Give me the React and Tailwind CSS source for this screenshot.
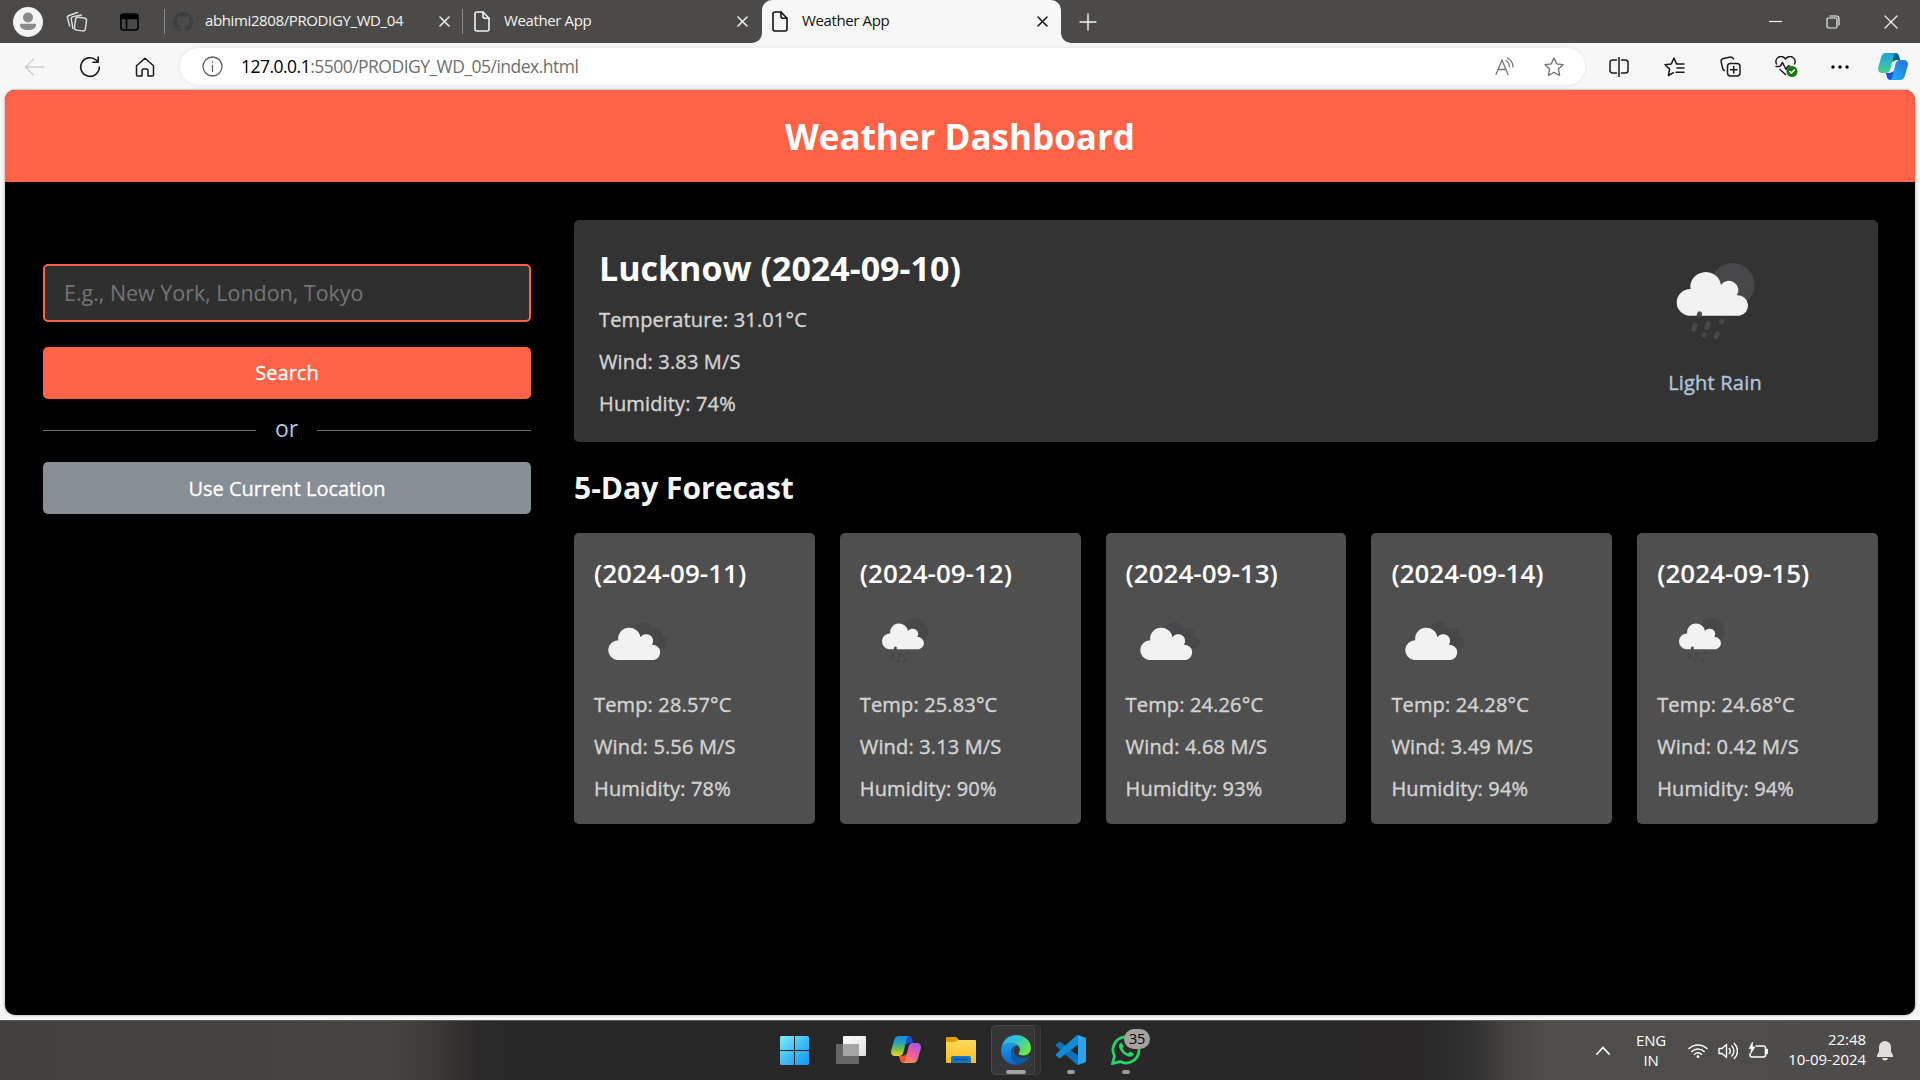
import React from "react";

const S = ({ w, h, vb, className = "", children, sw = 1.3, ...p }) => (
  <svg width={w} height={h ?? w} viewBox={vb ?? `0 0 ${w} ${h ?? w}`} fill="none" stroke="currentColor" strokeWidth={sw} strokeLinecap="round" strokeLinejoin="round" className={`block shrink-0 ${className}`} {...p}>
    {children}
  </svg>
);

const PageIcon = () => (
  <S w={16} h={21} sw={1.6}>
    <path d="M1 3a2 2 0 0 1 2-2h6l6 6.2V18a2 2 0 0 1-2 2H3a2 2 0 0 1-2-2z" />
    <path d="M9 1v4.2a2 2 0 0 0 2 2h4" />
  </S>
);

const CloseX = ({ className }) => (
  <S w={11} sw={1.5} className={className}><path d="M1 1l9 9M10 1l-9 9" /></S>
);

const CLOUD = "M13.5 46 A13.5 13.5 0 0 1 15 19.1 A14.7 14.7 0 0 1 44.6 15.2 A8.8 8.8 0 0 1 60 25.4 A10.4 10.4 0 0 1 62.5 46 Z";

const RainIcon = ({ width, height }) => (
  <svg width={width} height={height} viewBox="0 0 80 76" className="block">
    <circle cx="57.6" cy="22" r="22" fill="#48484a" />
    <path transform="translate(0 6.8) scale(1.03 1)" d={CLOUD} fill="#f2f2f2" />
    <g stroke="#48484a" strokeWidth="4.8" strokeLinecap="round">
      <path d="M24.6 50.8l-.5 1.6M20.3 62.2l-1.5 4M33.3 60.3l-1.6 4M47 57.9l-.6 1.2M29.3 71.4l-.3.8M42.3 70.4l-1.4 3.2" />
    </g>
  </svg>
);

const CloudIcon = () => (
  <svg width="62" height="40" viewBox="0 0 62 40" className="block">
    <path transform="translate(17.5 0) scale(.61 .6)" d={CLOUD} fill="#48484a" />
    <path transform="translate(0 5) scale(.75 .74)" d={CLOUD} fill="#f2f2f2" />
  </svg>
);

function TabBar() {
  return (
    <div className="flex h-[43px] bg-[#4b4a48] text-[#f2f2f2]">
      <div className="flex w-[165px] shrink-0 items-center pl-[13px]">
        <svg width="30" height="30" viewBox="0 0 30 30" className="shrink-0"><circle cx="15" cy="15" r="15" fill="#f5f5f5" /><circle cx="15" cy="10.5" r="5" fill="#8a8a8a" /><path d="M8 16.8h14c.7 0 1 .5 1 1.2 0 3-3.4 5-8 5s-8-2-8-5c0-.7.3-1.2 1-1.2z" fill="#8a8a8a" /></svg>
        <S w={22} className="ml-[23px] text-[#dcdcdc]" sw={1.4}>
          <rect x="9" y="6.5" width="11" height="13" rx="2.5" transform="rotate(8 14 13)" />
          <path d="M7 17.5l-1.7-9.2a2.3 2.3 0 0 1 1.8-2.7L15.5 4" />
          <path d="M3.7 15L1.5 7.2A2.3 2.3 0 0 1 3 4.5L11.5 1.5" />
        </S>
        <S w={19} h={18} className="ml-8 text-black" sw={1.6}><rect x="1" y="1" width="17" height="16" rx="2.5" /><path d="M1 2.5h17v3H1z" fill="currentColor" /><path d="M6.5 5v12" /></S>
        <div className="ml-[25px] h-[25px] w-px shrink-0 bg-[#8a8987]" />
      </div>
      <div className="flex w-[298px] items-center pl-[8px]">
        <svg width="20" height="20" viewBox="0 0 16 16" fill="#3a3f44" className="shrink-0"><path d="M8 0C3.580 0 0 3.580 0 8c0 3.540 2.290 6.530 5.470 7.590.4.070.55-.17.55-.38 0-.19-.010-.82-.010-1.490-2.010.37-2.530-.49-2.690-.94-.09-.23-.48-.94-.82-1.130-.28-.15-.68-.52-.010-.53.63-.010 1.080.58 1.230.82.72 1.210 1.870.87 2.330.66.070-.52.28-.87.51-1.070-1.780-.2-3.640-.89-3.640-3.950 0-.87.31-1.590.82-2.150-.08-.2-.36-1.020.08-2.120 0 0 .67-.21 2.200.82.64-.18 1.320-.27 2-.27s1.360.09 2 .27c1.530-1.040 2.200-.82 2.200-.82.44 1.100.16 1.920.08 2.120.51.56.82 1.270.82 2.150 0 3.070-1.870 3.750-3.650 3.950.29.25.54.73.54 1.480 0 1.070-.010 1.930-.010 2.200 0 .21.15.46.55.38A8.010 8.010 0 0 0 16 8c0-4.420-3.580-8-8-8z" /></svg>
        <span className="mb-0.5 ml-3 flex-1 whitespace-nowrap text-[15px] tracking-[-0.38px]">abhimi2808/PRODIGY_WD_04</span>
        <CloseX className="mr-[12px]" />
        <div className="h-[25px] w-px bg-[#8a8987]" />
      </div>
      <div className="flex w-[299px] items-center pl-[11px]">
        <PageIcon />
        <span className="mb-0.5 ml-[14px] flex-1 text-[15px] tracking-[-0.38px]">Weather App</span>
        <CloseX className="mr-[14px]" />
      </div>
      <div className="relative flex w-[299px] items-center rounded-t-[10px] bg-[#f7f7f7] pl-[10px] text-[#111]">
        <svg width="10" height="10" className="absolute bottom-0 -left-[10px]"><path d="M10 0v10H0A10 10 0 0 0 10 0z" fill="#f7f7f7" /></svg>
        <svg width="10" height="10" className="absolute bottom-0 -right-[10px]"><path d="M0 0v10h10A10 10 0 0 1 0 0z" fill="#f7f7f7" /></svg>
        <PageIcon />
        <span className="mb-0.5 ml-[14px] flex-1 text-[15px] tracking-[-0.38px]">Weather App</span>
        <CloseX className="mr-[13px]" />
      </div>
      <div className="flex flex-1 items-center pl-[18px]">
        <S w={18} sw={1.4}><path d="M9 1v16M1 9h16" /></S>
      </div>
      <div className="flex items-center pr-[22px]">
        <S w={13} sw={1.2} strokeLinecap="butt"><path d="M0 6.5h13" /></S>
        <S w={14} sw={1.2} className="ml-11"><rect x="1" y="3" width="10" height="10" rx="1.5" /><path d="M4 1h6.5A2.5 2.5 0 0 1 13 3.5V10" /></S>
        <S w={14} sw={1.2} className="ml-11"><path d="M1 1l12 12M13 1L1 13" /></S>
      </div>
    </div>
  );
}

function NavBar() {
  return (
    <div className="flex h-[47px] items-center bg-[#f7f7f7] text-[#1b1b1b]">
      <S w={21} h={18} className="ml-[24px] text-[#cfcfcf]" sw={1.4}><path d="M20 9H1.5M9.5 1L1.5 9l8 8" /></S>
      <S w={22} className="ml-[34px]" sw={1.6}><path d="M20.3 11a9.3 9.3 0 1 1-3.2-7l1.9 1.8M19.2 1v5.2H14" /></S>
      <S w={20} h={20} className="ml-[34px]" sw={1.5}><path d="M1.5 8.8L10 1.2l8.5 7.6V18a1 1 0 0 1-1 1H13v-5.5a1.5 1.5 0 0 0-1.5-1.5h-3A1.5 1.5 0 0 0 7 13.5V19H2.5a1 1 0 0 1-1-1z" /></S>
      <div className="ml-[25px] flex h-[37px] w-[1405px] items-center rounded-full bg-white pl-[22px] shadow-[0_0_4px_rgba(0,0,0,0.08)]">
        <S w={21} className="text-[#5f5f5f]" sw={1.3}><circle cx="10.5" cy="10.5" r="9.5" /><path d="M10.5 9.5v6M10.5 6v.3" sw={2} /></S>
        <span className="ml-[18px] flex-1 text-[17.5px] tracking-[-0.52px] text-[#6e6e6e]"><span className="text-black">127.0.0.1</span>:5500/PRODIGY_WD_05/index.html</span>
        <S w={20} h={19} className="text-[#767676]" sw={1.3}><path d="M1 17.5L7 3l6 14.5M3 12.5h8M11 3.5a7 7 0 0 1 3.3 6M12.5 1a10 10 0 0 1 5.5 9" /></S>
        <S w={20} h={20} className="mr-[21px] ml-[29px] text-[#767676]" sw={1.4}><path d="M10 1l2.7 5.9 6.3.8-4.6 4.4 1.2 6.4L10 15.4l-5.6 3.1 1.2-6.4L1 7.7l6.3-.8z" /></S>
      </div>
      <S w={20} className="ml-[24px]" sw={1.5}><path d="M7.5 3H3.5A2.5 2.5 0 0 0 1 5.5v8A2.5 2.5 0 0 0 3.5 16h4M12.5 3h4A2.5 2.5 0 0 1 19 5.5v8a2.5 2.5 0 0 1-2.5 2.5h-4M10 .5v19" /></S>
      <S w={21} h={20} className="ml-[35px]" sw={1.5}><path d="M12.5 6.9L10 1 7.3 6.900 1 7.700l4.600 4.400-1.200 6.400 5-2.800M12.500 6.900h7.500M13 11h7M12 15.200h8" /></S>
      <S w={21} h={21} className="ml-[35px]" sw={1.5}><rect x="7.5" y="7.5" width="12.5" height="12.5" rx="3" /><path d="M13.700 10.500v6.500M10.500 13.700H17M4.500 14.500a3 3 0 0 1-1.800-2.200L1.200 6A3 3 0 0 1 3.500 2.500L10.500 1a3 3 0 0 1 3 2" /></S>
      <S w={23} h={21} className="ml-[34px]" sw={1.5}><path d="M1.500 8A5 5 0 0 1 10.500 3.200 5 5 0 0 1 19.500 8M1 10.500h4L7.500 6.500l3.500 7 2.200-3.500H15M5 13.500L10.500 18.500" /><circle cx="17" cy="15.5" r="5.5" fill="#107c10" stroke="none" /><path d="M14.800 15.500l1.600 1.600 3-3.200" stroke="#fff" /></S>
      <svg width="18" height="4" viewBox="0 0 18 4" className="ml-[33px] shrink-0"><circle cx="2" cy="2" r="1.7" /><circle cx="9" cy="2" r="1.7" /><circle cx="16" cy="2" r="1.7" /></svg>
      <svg width="30" height="27" viewBox="0 0 30 27" className="ml-[29px] shrink-0">
        <defs>
          <linearGradient id="na" x1="0" y1="0" x2="0" y2="1"><stop offset="0" stopColor="#1aa0e0" /><stop offset="1" stopColor="#4fd08c" /></linearGradient>
          <linearGradient id="nb" x1="1" y1="0" x2="0" y2="1"><stop offset="0" stopColor="#2f6fd8" /><stop offset="1" stopColor="#16b4f6" /></linearGradient>
        </defs>
        <CopilotShape a="url(#na)" b="url(#nb)" c="#0a5f8c" d="#1d4fd8" />
      </svg>
    </div>
  );
}

const CopilotShape = ({ a, b, c, d }) => (
  <g>
    <path d="M15 0h2.5c2 0 3 1 3.5 3l1.2 4H18l-4 2z" fill={c} />
    <path d="M15 27h-2.5c-2 0-3-1-3.5-3l-1.2-4H12l4-2z" fill={d} />
    <path d="M8 0h10.5c-1.5 0-2.3 1.3-2.8 3l-3.2 13c-.8 2.5-2 4-4.5 4H4C1 20-.5 17.5.2 14.5L3 4.5C4 1.3 5.5 0 8 0z" fill={a} />
    <path d="M22 27H11.5c1.5 0 2.3-1.3 2.8-3l3.2-13c.8-2.5 2-4 4.5-4H26c3 0 4.5 2.5 3.8 5.5L27 22.5c-1 3.2-2.5 4.5-5 4.5z" fill={b} />
  </g>
);

const DAYS = [
  ["2024-09-11", "cloud", "28.57", "5.56", "78"],
  ["2024-09-12", "rain", "25.83", "3.13", "90"],
  ["2024-09-13", "cloud", "24.26", "4.68", "93"],
  ["2024-09-14", "cloud", "24.28", "3.49", "94"],
  ["2024-09-15", "rain", "24.68", "0.42", "94"],
];

function Dashboard() {
  return (
    <div className="mx-[5px] h-[925px] overflow-hidden rounded-[10px] bg-black font-['Open_Sans',sans-serif] shadow-[0_0_3px_rgba(0,0,0,0.4)]">
      <h1 className="flex h-[92px] items-center justify-center bg-[#ff6347] pt-[3px] text-[35px] font-bold text-white">Weather Dashboard</h1>
      <div className="flex gap-[43px] pt-[38px] pl-[38px]">
        <div className="w-[488px] shrink-0 pt-[44px]">
          <div className="flex h-[58px] items-center rounded-[5px] border-2 border-[#ff6347] bg-[#2f2f2f] px-[19px] text-[21.45px] text-[#757575]">E.g., New York, London, Tokyo</div>
          <button className="mt-[25px] flex h-[52px] w-full items-center justify-center rounded-[5px] bg-[#ff6347] text-[20px] text-white [-webkit-text-stroke:0.3px]">Search</button>
          <div className="flex h-[63px] items-center gap-[19px] text-[23px] text-[#b0c4de]">
            <div className="h-px w-[213px] bg-[#6c6c6c]" /><span className="relative -top-0.5">or</span><div className="h-px flex-1 bg-[#6c6c6c]" />
          </div>
          <button className="flex h-[52px] w-full items-center justify-center rounded-[5px] bg-[#868e96] pt-px text-[20px] text-white [-webkit-text-stroke:0.3px]">Use Current Location</button>
        </div>
        <div className="w-[1304px] shrink-0">
          <div className="flex h-[222px] justify-between rounded-[5px] bg-[#333] pr-[116px] pl-[25px]">
            <div className="pt-[25px] text-[20px] leading-[27px] tracking-[0.15px] text-[#d3d3d3] [-webkit-text-stroke:0.4px]">
              <h2 className="text-[34px] leading-[46px] font-bold tracking-normal text-white [-webkit-text-stroke:0]">Lucknow (2024-09-10)</h2>
              <p className="mt-[15px]">Temperature: 31.01°C</p>
              <p className="mt-[15px]">Wind: 3.83 M/S</p>
              <p className="mt-[15px]">Humidity: 74%</p>
            </div>
            <div className="flex w-[94px] flex-col items-center pt-[43px]">
              <RainIcon width={80} height={76} />
              <p className="mt-[30px] text-[20px] leading-[27px] tracking-[0.2px] whitespace-nowrap text-[#b0c4de] [-webkit-text-stroke:0.4px]">Light Rain</p>
            </div>
          </div>
          <h2 className="mt-[25px] mb-[25px] text-[30px] leading-[41px] font-bold text-[#f5f5f5]">5-Day Forecast</h2>
          <div className="grid grid-cols-5 gap-[25px]">
            {DAYS.map(([date, icon, temp, wind, hum]) => (
              <div key={date} className="h-[291px] rounded-[5px] bg-[#4f4f4f] pt-[23px] pl-5 text-[20px] leading-[27px] tracking-[0.15px] text-[#d3d3d3] [-webkit-text-stroke:0.4px]">
                <h3 className="text-[26px] leading-[35px] font-semibold tracking-normal text-white [-webkit-text-stroke:0]">({date})</h3>
                <div className={icon === "rain" ? "mt-[27px] h-[73px] pl-[21px]" : "mt-[30px] h-[70px] pl-[13px]"}>
                  {icon === "rain" ? <RainIcon width={47} height={45} /> : <CloudIcon />}
                </div>
                <p>Temp: {temp}°C</p>
                <p className="mt-[15px]">Wind: {wind} M/S</p>
                <p className="mt-[15px]">Humidity: {hum}%</p>
              </div>
            ))}
          </div>
        </div>
      </div>
    </div>
  );
}

function Taskbar() {
  return (
    <div className="mt-[5px] flex h-[60px] border-t border-[#5c5b5a] bg-[linear-gradient(90deg,#42413f_0px,#454441_390px,#3a3936_440px,#2b292a_480px,#282828_560px,#292728_1420px,#313030_1470px,#464542_1510px,#4f4e4b_1550px,#4d4c4b_1920px)] text-white">
      <div className="flex flex-1 pl-[780px]">
        <svg width="29" height="29" viewBox="0 0 29 29" className="mt-[15px] shrink-0"><defs><linearGradient id="win" gradientUnits="userSpaceOnUse" x1="0" y1="0" x2="29" y2="29"><stop offset="0" stopColor="#7eeefc" /><stop offset=".5" stopColor="#40bdf5" /><stop offset="1" stopColor="#1196f5" /></linearGradient></defs><path d="M1 0h13v14H0V1zM15 0h13l1 1v13H15zM0 15h14v14H1l-1-1zM15 15h14v13l-1 1H15z" fill="url(#win)" /></svg>
        <svg width="30" height="28" viewBox="0 0 30 28" className="mt-[15px] ml-[27px] shrink-0"><defs><linearGradient id="tv" x1="0" y1="0" x2="1" y2="1"><stop offset="0" stopColor="#fff" /><stop offset="1" stopColor="#dedede" /></linearGradient></defs><rect x="7" width="23" height="20" rx="1" fill="url(#tv)" /><rect y="8" width="23" height="20" rx="1" fill="#666" /><path d="M7 8h16v12H7z" fill="#a6a6a6" /></svg>
        <svg width="30" height="27" viewBox="0 0 30 27" className="mt-[15px] ml-[25px] shrink-0">
          <defs>
            <linearGradient id="ta" x1="0" y1="0" x2="0" y2="1"><stop offset="0" stopColor="#168de8" /><stop offset=".35" stopColor="#22a5b8" /><stop offset=".65" stopColor="#6cc04a" /><stop offset="1" stopColor="#f5d21c" /></linearGradient>
            <linearGradient id="tb" x1=".8" y1="0" x2=".3" y2="1"><stop offset="0" stopColor="#9d5cf0" /><stop offset=".5" stopColor="#e857a0" /><stop offset="1" stopColor="#ff8f5c" /></linearGradient>
          </defs>
          <CopilotShape a="url(#ta)" b="url(#tb)" c="#1a4fd0" d="#f0562c" />
        </svg>
        <svg width="30" height="27" viewBox="0 0 30 27" className="mt-4 ml-[25px] shrink-0"><defs><linearGradient id="fo" x1="0" y1="0" x2="0" y2="1"><stop offset="0" stopColor="#ffd95e" /><stop offset="1" stopColor="#fcbc1c" /></linearGradient></defs><path d="M0 1q0-1 1-1h8.5q1 0 1.6.8L13 3v5H0z" fill="#e0a008" /><path d="M0 5h9.5l2.5-2h17q1 0 1 1v22H1q-1 0-1-1z" fill="url(#fo)" /><path d="M5 26v-5q0-2 2-2h16q2 0 2 2v5z" fill="#1276c8" /><path d="M8.5 22.5h13" stroke="#0a4a86" strokeWidth="1.4" /></svg>
        <div className="relative mt-1 ml-[15px] h-[50px] w-[50px] shrink-0">
          <div className="absolute inset-0 rounded-[5px] border border-[#3c3c3c] bg-[#2f2f2f]" />
          <div className="absolute top-0 left-0 h-[50px] w-[44px] rounded-[5px] border border-[#474747] bg-[#363636]" />
          <svg width="30" height="30" viewBox="0 0 30 30" className="absolute top-[10px] left-[10px]">
            <defs>
              <linearGradient id="e1" x1="0" y1="0" x2="1" y2=".5"><stop offset="0" stopColor="#28a8ea" /><stop offset=".5" stopColor="#2fc3d6" /><stop offset="1" stopColor="#6be64c" /></linearGradient>
              <linearGradient id="e2" x1="0" y1="0" x2="0" y2="1"><stop offset="0" stopColor="#1aa0e8" /><stop offset="1" stopColor="#0d5fc4" /></linearGradient>
            </defs>
            <path d="M.5 13C1.6 5.3 7.5 0 15.2 0 23.5 0 30 6 30 13c0 4.5-3.3 7.5-7.5 7.5-2.6 0-5-.8-5-2 0-.8 1.5-1.4 1.5-4C19 11.3 15 8 10 8 5 8 2 10.5.5 13z" fill="url(#e1)" />
            <path d="M.2 14C1.5 10.3 5.3 8 10 8c2.5 0 5 .8 6.800 2.500C12.500 10.500 10 14 10 18c0 6.500 5 11 10 11-1.500.7-3.200 1-5 1C6.500 30-.8 23 .2 14z" fill="url(#e2)" />
            <path d="M16.500 10.500C12.500 10.800 10 14 10 18c0 6.500 4.500 11.700 9.500 11.200 4-1.200 7-4 8.700-7 .3-.7-.2-1.200-.9-.8C25.500 22.500 24 23 22 23c-5 0-9-3-9-7.500 0-2.200 1.300-4 3.500-5z" fill="#0c59a4" />
          </svg>
          <div className="absolute top-[45px] left-[15px] h-1 w-5 rounded-full bg-[#a5a29f]" />
        </div>
        <div className="relative ml-[15px] w-[30px] shrink-0 pt-[14px]">
          <svg width="30" height="30" viewBox="0 0 30 30"><path d="M22 0L30 3v24l-8 3z" fill="#2ba3f0" /><path d="M0 9.5L2.8 7q.8-.6 1.6 0L22 20.5V30q-1 0-1.8-.8L.3 11.3q-.8-1 0-1.8z" fill="#0b72bd" /><path d="M0 20.5L2.8 23q.8.6 1.6 0L22 9.5V0q-1 0-1.8.8L.3 18.7q-.8 1 0 1.800z" fill="#128bd6" /></svg>
          <div className="absolute top-[49px] left-[11px] h-1 w-2 rounded-full bg-[#9a9a9a]" />
        </div>
        <div className="relative ml-[25px] w-[30px] shrink-0 pt-[14px]">
          <svg width="30" height="30" viewBox="0 0 30 30"><path d="M1.5 28.5l2-7.3A13 13 0 1 1 9 26.6z" fill="none" stroke="#25d366" strokeWidth="2.8" /><path d="M10.5 7.5c-1.5.4-2.8 2-2.5 4 .7 4.5 5.8 9.8 11 10.3 2 .1 3.8-1.3 3.9-3.3l-4-2-2 2c-2.4-1-4.4-3-5.3-5.3l1.3-1.7z" fill="#25d366" /></svg>
          <div className="absolute top-2 left-[13px] flex h-5 w-[26px] items-center justify-center rounded-full bg-[#a5a29f] text-[14.5px] tracking-[-0.3px] text-black">35</div>
          <div className="absolute top-[49px] left-[11px] h-1 w-2 rounded-full bg-[#9a9a9a]" />
        </div>
      </div>
      <div className="flex items-center pr-[27px] text-[15px] leading-5">
        <S w={14} h={9} sw={1.8}><path d="M1 8l6-6.500L13 8" /></S>
        <div className="mb-[2px] ml-[26px] w-[30px] text-center tracking-[-0.2px]">ENG<br />IN</div>
        <S w={20} h={16} className="ml-[22px]" sw={1.5}><path d="M1 5.5a13 13 0 0 1 18 0M3.8 8.5a9 9 0 0 1 12.4 0M6.5 11.3a5 5 0 0 1 7 0" /><circle cx="10" cy="13.7" r="1.4" fill="currentColor" stroke="none" /></S>
        <S w={20} h={18} className="ml-[10px]" sw={1.4}><path d="M1 6.5h3L8.5 2.5v13L4 11.5H1zM11.3 6.5a4 4 0 0 1 0 5M13.8 4a7 7 0 0 1 0 10M16.3 1.5a10.5 10.5 0 0 1 0 15" /></S>
        <S w={21} h={17} className="ml-[10px]" sw={1.5}><path d="M8 4h7.5a2 2 0 0 1 2 2v7a2 2 0 0 1-2 2H4a2 2 0 0 1-2-2v-1" /><path d="M18 7.5h1.2v4H18z" fill="currentColor" /><path d="M4.5 0L1 6.5h2.5L2.5 12 7 5H4.5z" fill="currentColor" strokeWidth=".6" /></S>
        <div className="mb-[4px] ml-[19px] w-[78px] text-right tracking-[-0.05px] whitespace-nowrap"><div>22:48</div><div className="flex justify-end">10-09-2024</div></div>
        <svg width="16" height="20" viewBox="0 0 16 20" fill="#e0dfde" className="ml-[11px]"><path d="M8 0a6 6 0 0 1 6 6v4.5l2 4V16H0v-1.5l2-4V6a6 6 0 0 1 6-6zM5.2 17h5.6a2.8 2.5 0 0 1-5.6 0z" /></svg>
      </div>
    </div>
  );
}

export default function App() {
  return (
    <div className="h-[1080px] w-[1920px] overflow-hidden bg-[#f7f7f7] font-['Open_Sans','Noto_Sans',sans-serif]">
      <TabBar />
      <NavBar />
      <Dashboard />
      <Taskbar />
    </div>
  );
}
